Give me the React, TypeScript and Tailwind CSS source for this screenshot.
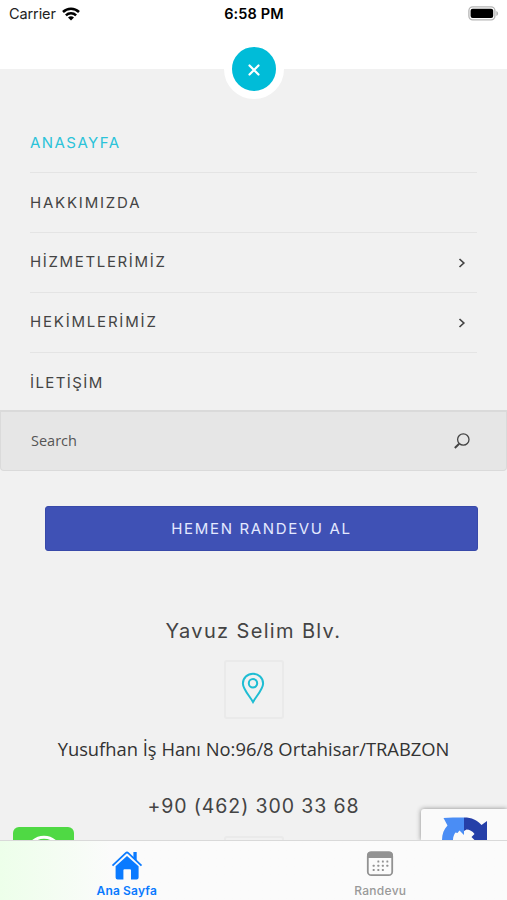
import type { ReactNode } from "react";
import clsx from "clsx";

type MenuEntry = {
  label: string;
  tracking: string;
  active?: boolean;
  hasChildren?: boolean;
};

const MENU: MenuEntry[] = [
  { label: "ANASAYFA", tracking: "tracking-[1.45px]", active: true },
  { label: "HAKKIMIZDA", tracking: "tracking-[1.8px]" },
  { label: "HİZMETLERİMİZ", tracking: "tracking-[1.65px]", hasChildren: true },
  { label: "HEKİMLERİMİZ", tracking: "tracking-[1.8px]", hasChildren: true },
  { label: "İLETİŞİM", tracking: "tracking-[1.4px]" },
];

function WifiIcon() {
  return (
    <svg width="18" height="14" viewBox="0 0 18 14" fill="none" stroke="#000" strokeWidth="2.5">
      <path d="M1 5a11.4 11.4 0 0 1 16 0" />
      <path d="M3.9 8.3a7.3 7.3 0 0 1 10.2 0" />
      <path d="M9 13.6 6 10.6a4.3 4.3 0 0 1 6 0z" fill="#000" stroke="none" />
    </svg>
  );
}

function BatteryIcon() {
  return (
    <svg width="31" height="15" viewBox="0 0 31 15" fill="none">
      <rect x="0.9" y="0.9" width="26" height="13" rx="3.8" stroke="#b5b5b5" strokeWidth="1.3" />
      <rect x="2.6" y="2.7" width="22.6" height="9.4" rx="2" fill="#000" />
      <path d="M28.3 5v5c1.1-.4 1.8-1.4 1.8-2.5S29.4 5.4 28.3 5z" fill="#b5b5b5" />
    </svg>
  );
}

function HomeIcon() {
  return (
    <svg width="32" height="29" viewBox="0 0 32 29">
      <path d="M1.5 14.6 14.7 2.1q1.3-1.2 2.6 0L30.5 14.6" fill="none" stroke="#0a7aff" strokeWidth="1.8" />
      <path d="M22.4 1h3.3v9l-3.3-3z" fill="#0a7aff" />
      <path
        d="M4.6 15.3 16 4.9l11.6 10.4v11.2q0 2-2 2H20v-9.3q0-1-1-1h-5.6q-1 0-1 1v9.3H6.600q-2 0-2-2z"
        fill="#0a7aff"
      />
    </svg>
  );
}

function CalendarIcon() {
  const dots = [
    [11.5, 10.5], [16, 10.5], [20.5, 10.5],
    [6.8, 14.7], [11.5, 14.7], [16, 14.7], [20.5, 14.7],
    [6.8, 19], [11.5, 19], [16, 19],
  ];
  return (
    <svg width="28" height="26" viewBox="0 0 28 26" fill="#929292">
      <rect x="1.8" y="1.4" width="24.4" height="22.8" rx="3.5" fill="none" stroke="#929292" strokeWidth="1.8" />
      <path d="M1 6.9V4.6Q1 .6 5 .6h18q4 0 4 4v2.3z" />
      {dots.map(([x, y]) => (
        <rect key={`${x}-${y}`} x={x - 0.1} y={y - 0.9} width="1.9" height="1.9" rx="0.5" />
      ))}
    </svg>
  );
}

function IconBox({ children }: { children?: ReactNode }) {
  return (
    <div className="flex h-[59px] w-[60px] shrink-0 items-center justify-center rounded-[3px] border-2 border-[#eaeaea]">
      {children}
    </div>
  );
}

function StatusBar() {
  return (
    <div className="flex h-7 shrink-0 items-center pl-[9px] pr-[8px] text-[14.5px] leading-none text-black">
      <div className="flex flex-1 items-center gap-[6px]">
        <span className="tracking-[-0.1px] text-[#222]">Carrier</span>
        <WifiIcon />
      </div>
      <span className="font-semibold tracking-[0.15px]">6:58 PM</span>
      <div className="flex flex-1 justify-end pb-px">
        <BatteryIcon />
      </div>
    </div>
  );
}

export default function App() {
  return (
    <div className="flex h-[900px] w-[507px] flex-col overflow-hidden bg-[#f1f1f1] font-['Inter',sans-serif] text-[#444]">
      <header className="flex h-[69px] shrink-0 flex-col bg-white">
        <StatusBar />
        <button
          aria-label="Kapat"
          className="mt-[11px] flex size-[60px] shrink-0 items-center justify-center self-center rounded-full border-8 border-white bg-[#00bcd8]"
        >
          <svg width="12" height="12" viewBox="0 0 12 12" stroke="#fff" strokeWidth="2.2" strokeLinecap="round" className="translate-y-px">
            <path d="M1.5 1.5l9 9M10.5 1.5l-9 9" />
          </svg>
        </button>
      </header>

      <main className="flex min-h-0 flex-1 flex-col overflow-hidden">
        <nav className="mt-[44px] h-[298px] shrink-0 px-[30px]">
          {MENU.map((m) => (
            <a
              key={m.label}
              className={clsx(
                "flex h-[59.9px] items-center justify-between border-b border-[#e4e4e4] pr-[11px] pt-px text-[15px] last:border-b-0",
                m.active && "text-[#2bc3d9]",
              )}
            >
              <span className={m.tracking}>{m.label}</span>
              {m.hasChildren && (
                <svg width="8" height="10" viewBox="0 0 8 10" fill="none" stroke="#444" strokeWidth="1.7">
                  <path d="M1.5 1l4.3 4-4.3 4" />
                </svg>
              )}
            </a>
          ))}
        </nav>

        <div className="-mt-px flex h-[61px] shrink-0 items-center justify-between rounded-b-[4px] border border-t-2 border-[#dadada] bg-[#e6e6e6] pl-[30px] pr-[36px]">
          <span className="font-['Open_Sans',sans-serif] text-[14.5px] text-[#555]">Search</span>
          <svg width="16" height="16" viewBox="0 0 16 16" fill="none" stroke="#444">
            <circle cx="9.3" cy="6.5" r="5.7" strokeWidth="1.3" />
            <path d="M5.2 10.7.8 15" strokeWidth="2" />
          </svg>
        </div>

        <a className="ml-[45px] mr-[29px] mt-[35px] flex h-[45px] shrink-0 items-center justify-center rounded-[3px] border border-[#3849a9] bg-[#3f51b5] pt-px text-[15px] tracking-[1.65px] text-[#e4e9ff]">
          HEMEN RANDEVU AL
        </a>

        <section className="flex shrink-0 flex-col items-center">
          <h3 className="mt-[64px] h-8 text-[20px] leading-8 tracking-[1.35px]">Yavuz Selim Blv.</h3>
          <div className="mt-[13px]">
            <IconBox>
              <svg width="24" height="32" viewBox="0 0 24 32" fill="none" stroke="#1fbdd3" strokeWidth="2" className="-translate-x-px -translate-y-[2px]">
                <path d="M12 30C9 24.5 1.9 17.3 1.9 11.5a10.1 9.8 0 0 1 20.2 0C22.1 17.3 15 24.5 12 30z" />
                <circle cx="12" cy="11.3" r="4.2" />
              </svg>
            </IconBox>
          </div>
          <p className="mt-[14px] h-8 whitespace-nowrap font-['Open_Sans',sans-serif] text-[18.35px] leading-8 text-[#333]">
            Yusufhan İş Hanı No:96/8 Ortahisar/TRABZON
          </p>
          <h3 className="mt-[25px] h-8 text-[19.5px] leading-8 tracking-[0.9px]">+90 (462) 300 33 68</h3>
          <div className="mt-[14px]">
            <IconBox />
          </div>
        </section>
      </main>

      <div className="relative h-[60px] shrink-0">
        {/* floating widgets peeking out from behind the tab bar */}
        <div className="absolute -top-[13px] left-[13px] flex h-[13px] w-[61px] justify-center overflow-hidden rounded-t-[6px] bg-[#4fd944]">
          <svg width="42" height="13" viewBox="0 0 42 13" fill="none">
            <circle cx="21" cy="27" r="16.8" stroke="#fff" strokeWidth="3" />
          </svg>
        </div>
        <div className="absolute -top-[31px] right-0 flex h-[31px] w-[86px] overflow-hidden rounded-tl-[3px] bg-[#fafafa] pl-[15px] pt-[8px] shadow-[0_0_5px_#888]">
          <svg width="52" height="23" viewBox="0 0 52 23" className="shrink-0">
            <path d="M6 23C6 17 8 12 11.5 8.5L7.500 1C13 .6 21 .5 28 .5V18l-4.500-4.500-2 2.500-2-.5c-1.500 2-2.500 4.500-2.500 7.500z" fill="#4a8df5" />
            <path d="M28 .5c8 0 13 2.500 17.500 7.500L51 4v19H38.500l-3-3 3-3c-2-3-5-4.500-8-4.500L28 14z" fill="#253fa8" />
          </svg>
        </div>
        <div className="relative grid h-full grid-cols-2 border-t border-[#d9d9d9] bg-[#fbfbfb] bg-linear-to-r from-[#edffea] via-[#fbfbfb] via-[22%] to-[#fbfbfb] text-[12px] leading-none">
          <div className="flex flex-col items-center pt-[10px] text-[#0a7aff]">
            <HomeIcon />
            <span className="mt-[5px] font-semibold tracking-[0.15px]">Ana Sayfa</span>
          </div>
          <div className="flex flex-col items-center pt-[10px] text-[#999]">
            <CalendarIcon />
            <span className="mt-[8px] font-medium tracking-[0.3px]">Randevu</span>
          </div>
        </div>
      </div>
    </div>
  );
}
